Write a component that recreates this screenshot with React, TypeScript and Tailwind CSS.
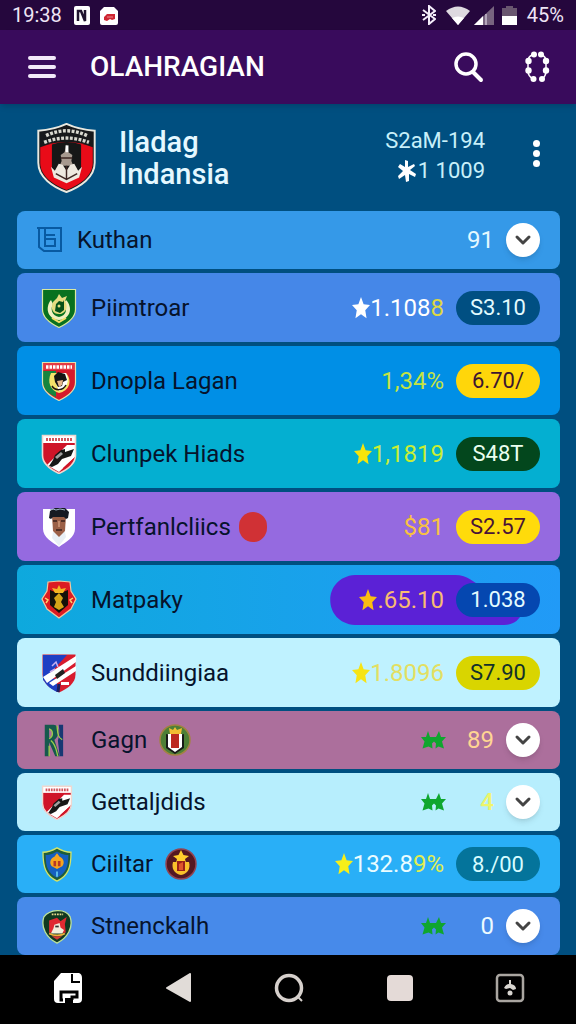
import React from 'react';
import { ChevronDown } from 'lucide-react';

const STAR = 'M12 1l3.2 7.2 7.8.8-5.8 5.3 1.6 7.9-6.8-4-6.8 4 1.6-7.9L1 9l7.8-.8z';

const Star: React.FC<{ className: string }> = ({ className }) => (
  <svg viewBox="1 1 22 22" className={`h-[22px] w-[18px] shrink-0 ${className}`} fill="currentColor" preserveAspectRatio="none">
    <path d={STAR} />
  </svg>
);

const DoubleStar: React.FC = () => (
  <svg viewBox="0 0 25 18" className="h-[18px] w-[25px] shrink-0 fill-[#0fa62e]">
    <path d="M7 0l2 6h5l1 0 3-6 2 6h5l-4 4.500 2 7-5.500-2-3 2 .5-5-2-2-2 2 .5 5-4-2L1.500 17.500l2-7L0 6h5z" />
  </svg>
);

const SHIELD = 'M1.500 1.500h33v20c0 9-8 14-16.500 18C9.500 35.500 1.500 30.500 1.500 21.500z';

const crests: Record<string, React.ReactNode> = {
  green: (
    <>
      <path d={SHIELD} fill="#08711f" stroke="#d9e9a0" strokeWidth="1.200" />
      <path d="M10 12c-6 7-4 19 8 20 12-1 14-13 7-20l-2 3c4 6 2 13-5 14-7-1-9-8-6-13z" fill="#f1f0c0" />
      <path d="M12 14l4-4 2-4 3 4 5-2-2 5c3 5 2 11-4 13-8 1-11-5-8-12z" fill="#e7dc80" />
      <path d="M15 16l3-3 4 1 1-2v10l-4 3-5-2z" fill="#075019" />
      <path d="M11 30l7 4 7-4" stroke="#f3df68" strokeWidth="2" fill="none" />
      <circle cx="18" cy="18" r="1.500" fill="#e8e080" />
    </>
  ),
  garuda: (
    <>
      <path d={SHIELD} fill="#d5192c" />
      <path d="M2 10h13v26C6 32 2 28 2 21z" fill="#16853e" />
      <path d="M2 2h32v7H2z" fill="#e43a43" />
      <path d="M5 6h26" stroke="#fff" strokeWidth="3.500" strokeDasharray="2.500 1" />
      <path d="M10 12h15c7 8 3 18-7 20-9-3-12-11-8-20z" fill="#f5e36a" />
      <path d="M16 12h9c4 8 1 15-7 18-3-6-4-12-2-18z" fill="#fff" />
      <path d="M13 15l4-4 7 2 2 6-4 2-1 4-4 1-3-5z" fill="#151515" />
      <path d="M16 20l6-1-1 5-3 2z" fill="#e7b98b" />
      <path d="M11 25c3 5 11 5 14-1" stroke="#201810" strokeWidth="1.500" fill="none" />
      <path d={SHIELD} fill="none" stroke="#dfe2b0" strokeWidth="1.200" />
    </>
  ),
  striped: (
    <>
      <path d={SHIELD} fill="#cf1428" />
      <path d="M2 2h32v7H2z" fill="#fff" />
      <path d="M5 5.500h26" stroke="#d2555c" strokeWidth="3" strokeDasharray="2 1" />
      <path d="M34 11v12L18 38 6 31 26 11z" fill="#fff" />
      <path d="M8 32l4-6 2-5 6-5 4-1v3l9-3-3 7-9 3-4 5-6 3z" fill="#171717" />
      <path d="M14 23l6-5 2 2-6 5z" fill="#a0a0a0" />
      <path d="M22 34l12-11v3c-3 5-7 8-12 10z" fill="#cf1428" />
      <path d={SHIELD} fill="none" stroke="#f1d7cf" strokeWidth="1.600" />
    </>
  ),
  portrait: (
    <>
      <path d="M2 2h32v20c0 8-9 13-16 18C11 35 2 30 2 22z" fill="#fff" />
      <path d="M12 25h12l1 5-7 9-7-8z" fill="#e8eff5" />
      <path d="M11 9h14l-1 15-6 6-6-6z" fill="#9b6047" />
      <path d="M8 11l1-7 5-3h10l4 4-1 6-2 1-2-2h-11l-2 2z" fill="#161a22" />
      <path d="M12 14h4M20 14h4M15 23h6" stroke="#3a201c" strokeWidth="1.500" />
      <path d="M18 14v6" stroke="#d09a7a" strokeWidth="1.500" />
      <path d="M9 3l3-1 3 1 4-1 5 1" stroke="#9eb5c8" strokeWidth="1" fill="none" />
    </>
  ),
  crimson: (
    <>
      <path d="M7 2l11-1 11 1 1 9 5 8-5 10-12 9L6 29 1 19l5-8z" fill="#dc1b22" stroke="#f0c8a0" strokeWidth="1.200" />
      <path d="M9 10l5 2 4-5 4 5 5-2v15l-9 8-9-8z" fill="#151109" />
      <path d="M18 5l2 4 5-1-3 5H14l-3-5 5 1z" fill="#f5b522" />
      <path d="M18 13l4 5-2 4 3 5-5 3-5-3 2-5-2-4z" fill="#d5a418" />
      <path d="M4 18l3 2-2 3M32 18l-3 2 2 3" fill="none" stroke="#ffd26a" strokeWidth="1.500" />
    </>
  ),
  duo: (
    <>
      <path d={SHIELD} fill="#d81c2e" />
      <path d="M2 2h24L2 28z" fill="#1e3fc4" />
      <path d="M16 26v13C8 35 4 31 2 25z" fill="#1e3fc4" />
      <path d="M35 3v6L6 30l-4-6zM35 13v5L12 33l-4-3z" fill="#fff" />
      <path d="M11 13l4-4 2 5M9 19l5-3" stroke="#c8b0f0" strokeWidth="1.500" fill="none" />
      <path d="M14 22l8-6 2 4-8 6z" fill="#222" />
      <path d="M20 29h8v3h-8z" fill="#fff" />
      <path d="M18 31l-1 8" stroke="#172060" strokeWidth="3" />
    </>
  ),
  monogram: (
    <>
      <path d="M4 2h5v36H4zM9 2h5c7 0 8 13 1 17l6 19h-5L9 22v-5c5-1 5-10 0-11z" fill="#15594d" />
      <path d="M20 2h5v36h-4l-2-18c2-5 2-11 1-18z" fill="#173873" />
      <path d="M9 7c5 1 5 9 0 11M11 20c6 5 6 11 8 18M9 26v12M18 3c1 7 0 13 6 16" stroke="#9ccf4a" strokeWidth="1.500" fill="none" />
    </>
  ),
  azure: (
    <>
      <path d="M2 6c6 0 11-2 16-5 5 3 10 5 16 5 0 17-3 27-16 33C5 33 2 23 2 6z" fill="#1e5c3c" stroke="#d4e465" strokeWidth="1.500" />
      <path d="M5 9c6 0 9-2 13-4 4 2 7 4 13 4 0 14-3 21-13 26C8 30 5 23 5 9z" fill="#155fc0" />
      <path d="M18 7l3 4c5 2 6 7 3 11l-6 3-6-3c-3-4-2-9 3-11z" fill="#f6a51f" />
      <path d="M14 16h3v6h-3zM19 16h3v6h-3z" fill="#b63725" />
      <path d="M18 28v6" stroke="#62c9ee" strokeWidth="2" />
    </>
  ),
  rounded: (
    <>
      <path d="M3 9c6-8 24-11 30 0 4 12-3 24-15 30C6 33-1 21 3 9z" fill="#103920" stroke="#bce39a" strokeWidth="1.500" />
      <path d="M9 13l9-3 4 4 7-5-2 8 1 10H9z" fill="#e02a31" />
      <path d="M12 6h13" stroke="#e6d98c" strokeWidth="2" strokeDasharray="2 1" />
      <path d="M15 18l6-2 1 5 4 3-2 4H11l3-6z" fill="#f4eedb" />
      <path d="M16 19h4v2h-4z" fill="#333" />
      <path d="M9 28c5 3 14 3 18 0" stroke="#f0b13c" strokeWidth="2" fill="none" />
      <path d="M12 31l6 4 6-4z" fill="#d43a34" />
    </>
  ),
};

const medals: Record<string, React.ReactNode> = {
  olive: (
    <svg viewBox="0 0 32 32" className="ml-3 size-8">
      <circle cx="16" cy="16" r="15" fill="#4d7f36" stroke="#a28340" strokeWidth="1.500" />
      <path d="M7 10l4 1v10l5 5 5-5V11l4-1v14l-9 6-9-6z" fill="#171a17" />
      <path d="M9 10h14v13l-7 5-7-5z" fill="#fff" />
      <path d="M12 10h8v14h-8z" fill="#bc2921" />
      <path d="M10 4l4 2 2-3 2 3 5-2-1 6H11z" fill="#f2bd32" />
    </svg>
  ),
  maroon: (
    <svg viewBox="0 0 32 32" className="ml-3 size-8">
      <circle cx="16" cy="16" r="15" fill="#541822" stroke="#934452" strokeWidth="1.500" />
      <path d="M16 2l2.500 5 5.500 1-4 3 1 4h-10l1-4-4-3 5.500-1z" fill="#ffce2d" />
      <path d="M8 14h16c2 7-2 12-8 13-6-1-10-6-8-13z" fill="#f9c12b" />
      <path d="M12 13h8v10h-8z" fill="#9b2119" />
      <path d="M14 16l4-2v8h-4z" fill="#df562c" />
    </svg>
  ),
};

const Crest: React.FC<{ id: string; tall: boolean }> = ({ id, tall }) => {
  if (id === 'box') {
    return (
      <svg viewBox="0 0 26 26" className="size-[26px] shrink-0" fill="none" stroke="#085aa2" strokeWidth="2">
        <path d="M0 1h24v23H7l-5-4V1M8 1v18h10v-7H8m0-4h10" />
      </svg>
    );
  }
  return (
    <svg viewBox="0 0 36 40" className={tall ? 'h-10 w-9 shrink-0' : 'h-[35px] w-8 shrink-0'}>
      {crests[id]}
    </svg>
  );
};

type Team = {
  name: string;
  crest: string;
  tall?: boolean;
  bg: string;
  value: React.ReactNode;
  valueColor: string;
  star?: string;
  pill?: string;
  pillStyle?: string;
  stars?: boolean;
  extra?: React.ReactNode;
  blob?: boolean;
};

const teams: Team[] = [
  { name: 'Kuthan', crest: 'box', bg: 'bg-[#3599e8]', value: '91', valueColor: 'text-[#e4f8ff]' },
  {
    name: 'Piimtroar', crest: 'green', tall: true, bg: 'bg-[#4587e8]',
    value: <>1.108<span className="text-[#ded743]">8</span></>, valueColor: 'text-white',
    star: 'text-white', pill: 'S3.10', pillStyle: 'bg-[#004f82] text-[#e2fbff]',
  },
  {
    name: 'Dnopla Lagan', crest: 'garuda', tall: true, bg: 'bg-[#008fe6]', value: '1,34%', valueColor: 'text-[#c5e342]',
    pill: '6.70/', pillStyle: 'bg-[#ffd60a] text-[#3c1531]',
  },
  {
    name: 'Clunpek Hiads', crest: 'striped', tall: true, bg: 'bg-[#04afd1]', value: '1,1819', valueColor: 'text-[#c9ee35]',
    star: 'text-[#f5e50b]', pill: 'S48T', pillStyle: 'bg-[#03471d] text-[#eafff0]',
  },
  {
    name: 'Pertfanlcliics', crest: 'portrait', tall: true, bg: 'bg-[#956ae0]', value: '$81', valueColor: 'text-[#f8c140]',
    pill: 'S2.57', pillStyle: 'bg-[#ffdb0b] text-[#481337]',
    extra: <span className="ml-2 h-[30px] w-7 rounded-full bg-[#d03135]" />,
  },
  {
    name: 'Matpaky', crest: 'crimson', tall: true, bg: 'bg-linear-to-r from-[#0ea9dd] to-[#219af7]', value: '.65.10', valueColor: 'text-[#f8bb72]',
    star: 'text-[#fbbd12]', pill: '1.038', pillStyle: 'bg-[#0547b0] text-[#e3fbff]', blob: true,
  },
  {
    name: 'Sunddiingiaa', crest: 'duo', tall: true, bg: 'bg-[#bff2ff]', value: '1.8096', valueColor: 'text-[#e3df61]',
    star: 'text-[#f7e414]', pill: 'S7.90', pillStyle: 'bg-[#d9d500] text-[#12302b]',
  },
  {
    name: 'Gagn', crest: 'monogram', bg: 'bg-[#ac6f9c]', value: '89', valueColor: 'text-[#ffd593]', stars: true,
    extra: medals.olive,
  },
  { name: 'Gettaljdids', crest: 'striped', bg: 'bg-[#b7eefd]', value: '4', valueColor: 'text-[#edf56b] font-medium', stars: true },
  {
    name: 'Ciiltar', crest: 'azure', bg: 'bg-[#29aff7]', value: <>132.8<span className="text-[#e2ee50]">9%</span></>, valueColor: 'text-[#eafcff]',
    star: 'text-[#f7ef18]', pill: '8./00', pillStyle: 'bg-[#04749b] text-[#d6fcff]', extra: medals.maroon,
  },
  { name: 'Stnenckalh', crest: 'rounded', bg: 'bg-[#478aea]', value: '0', valueColor: 'text-[#ecfaff]', stars: true },
];

const TeamRow: React.FC<{ team: Team }> = ({ team }) => (
  <li className={`relative flex items-center rounded-lg pr-5 ${team.crest === 'box' ? 'pl-5' : 'pl-6'} ${team.tall ? 'h-[69px]' : 'h-[58px]'} ${team.bg}`}>
    {team.blob && (
      <svg viewBox="0 0 194 50" className="absolute right-9 h-[50px] w-[194px]" fill="#5b21d6">
        <path d="M25 0H125C138 0 144 8 156 14L192 38C189 46 182 50 174 50H25C-8 48-8 2 25 0z" />
      </svg>
    )}
    <div className={`flex shrink-0 items-center ${team.crest === 'box' ? 'w-10' : 'w-[50px]'}`}>
      <Crest id={team.crest} tall={!!team.tall} />
    </div>
    <span className="text-[24px] leading-8 text-[#06132c]">{team.name}</span>
    {team.extra}
    <div className="relative ml-auto flex items-center">
      {team.star && <Star className={team.star} />}
      {team.stars && <DoubleStar />}
      <span className={`text-[24px] leading-8 ${team.pill ? '' : 'w-12 text-right'} ${team.valueColor}`}>{team.value}</span>
      {team.pill ? (
        <span className={`ml-3 flex h-[34px] w-[84px] items-center justify-center rounded-full text-[22px] ${team.pillStyle}`}>{team.pill}</span>
      ) : (
        <button type="button" aria-label={`Expand ${team.name}`} className="ml-3 flex size-[34px] items-center justify-center rounded-full bg-white text-[#444] shadow-md">
          <ChevronDown size={24} strokeWidth={3} />
        </button>
      )}
    </div>
  </li>
);

const StatusBar: React.FC = () => (
  <div className="flex h-[30px] items-center bg-[#25073d] px-3 text-[20px] leading-7 text-[#eee5f5]">
    <span>19:38</span>
    <svg viewBox="0 0 16 19" className="ml-3 h-[19px] w-4">
      <rect width="16" height="19" rx="2" fill="#fff" />
      <path d="M4 15V5h3l4 10V4" fill="none" stroke="#20142e" strokeWidth="2.500" />
    </svg>
    <svg viewBox="0 0 18 19" className="ml-2.5 h-[19px] w-[18px]">
      <path d="M4 1h10l4 4v12q0 2-2 2H2q-2 0-2-2V5z" fill="#fff" />
      <path d="M4 14V11l3-3h8v5l-3 1-2-1-3 2z" fill="#cf2633" />
      <path d="M7 11h6" stroke="#e98a8f" />
    </svg>
    <div className="ml-auto flex items-center">
      <svg viewBox="0 0 14 20" className="h-5 w-3.5" fill="none" stroke="#f5eefa" strokeWidth="2">
        <path d="M1 5l12 9-6 5V1l6 5-12 9M0 10h3M11 10h3" />
      </svg>
      <svg viewBox="0 0 24 19" className="ml-2.5 h-[19px] w-6">
        <path d="M0 5Q12-4 24 5L12 19z" fill="#ded9e0" />
        <path d="M6 12q6-3 12 0l-6 7z" fill="#fff" />
      </svg>
      <svg viewBox="0 0 20 19" className="ml-1 h-[19px] w-5">
        <path d="M20 0v19H0z" fill="#77647f" />
        <path d="M9 10v9H0z" fill="#fff" />
        <path d="M12 8v11" stroke="#b3a5ba" strokeWidth="2" />
      </svg>
      <svg viewBox="0 0 15 19" className="ml-2 h-[19px] w-[15px]">
        <path d="M4 0h7v2h4v17H0V2h4z" fill="#69566f" />
        <path d="M0 10h15v9H0z" fill="#fff" />
      </svg>
      <span className="ml-2.5">45%</span>
    </div>
  </div>
);

const AppBar: React.FC = () => (
  <header className="relative flex h-[74px] items-center bg-[#390b5c] pr-[26px] pl-7 shadow-md">
    <button type="button" aria-label="Menu" className="flex w-7 flex-col gap-[5px]">
      <span className="h-1 rounded-full bg-[#f3e9fa]" />
      <span className="h-1 rounded-full bg-[#f3e9fa]" />
      <span className="h-1 rounded-full bg-[#f3e9fa]" />
    </button>
    <h1 className="ml-[34px] text-[28px] font-medium text-white">OLAHRAGIAN</h1>
    <button type="button" aria-label="Search" className="ml-auto">
      <svg viewBox="0 0 30 31" className="h-[31px] w-[30px]" fill="none" stroke="#fff" strokeLinecap="round">
        <circle cx="12" cy="12" r="10" strokeWidth="3.500" />
        <path d="M19 20l8 8" strokeWidth="4" />
      </svg>
    </button>
    <button type="button" aria-label="Settings" className="ml-10">
      <svg viewBox="0 0 26 32" className="h-8 w-[26px]" fill="#fff">
        <path d="M8 4Q4 6 4 10v10q0 5 5 8M18 4q4 2 4 6v10q0 5-4 8" fill="none" stroke="#fff" strokeWidth="1.500" />
        <circle cx="10" cy="3.500" r="3" /><circle cx="17" cy="3.500" r="3" />
        <circle cx="4.500" cy="10" r="3.200" /><circle cx="22" cy="10" r="3.200" />
        <circle cx="4.500" cy="19.500" r="3.200" /><circle cx="22" cy="19.500" r="3.200" />
        <circle cx="9.500" cy="28" r="3" /><circle cx="18" cy="28" r="3" />
      </svg>
    </button>
  </header>
);

const Summary: React.FC = () => (
  <section className="flex h-[107px] items-center pr-9 pl-9">
    <svg viewBox="0 0 62 72" className="h-[70px] w-[61px] shrink-0">
      <path d="M2 8Q18 7 31 1q13 6 29 7v33c0 15-15 25-29 30C17 66 2 56 2 41z" fill="#17191b" stroke="#e9e9e0" strokeWidth="2" />
      <path d="M4 25q27-11 54 0v16c0 14-14 23-27 28C18 64 4 55 4 41z" fill="#e90b18" />
      <path d="M10 13q21-10 42 0M8 20q23-9 46 0" fill="none" stroke="#d8d8cf" strokeWidth="3.500" strokeDasharray="3 1.500" />
      <path d="M16 22q15-5 30 0v25q-3 8-15 13-12-5-15-13z" fill="#161717" />
      <path d="M31 22l2 8 4 3-1 6 2 5H24l2-5-1-6 4-3z" fill="#a79a8f" />
      <path d="M30 23h3v7h-3z" fill="#fff" />
      <path d="M15 45l4 4 4-7 4 1 4 6 4-6 4-1 4 7 4-4-3 11-13 6-13-6z" fill="#eee9df" />
      <path d="M20 52l11 6 11-6M31 44v14M25 36l12 0" fill="none" stroke="#3e2723" strokeWidth="1.500" />
    </svg>
    <h2 className="ml-[22px] text-[29px] leading-8 font-medium text-[#e5f8ff]">
      Iladag
      <br />
      Indansia
    </h2>
    <div className="ml-auto flex flex-col items-end pb-1 text-[22px] leading-[30px] text-[#c8f0fa]">
      <span>S2aM-194</span>
      <span className="flex items-center">
        <svg viewBox="0 0 18 22" className="h-[22px] w-[18px]">
          <path d="M7 0l3 1v6l6-3 1 2-5 4 6 4-1 3-6-3v7l-3 1-1-7-6 4-1-3 5-5-5-4 2-3 5 3z" fill="#fff" />
        </svg>
        <span className="ml-0.5">1 1009</span>
      </span>
    </div>
    <button type="button" aria-label="More" className="ml-12 flex flex-col gap-[3px] pb-2">
      <span className="size-[7px] rounded-full bg-white" />
      <span className="size-[7px] rounded-full bg-white" />
      <span className="size-[7px] rounded-full bg-white" />
    </button>
  </section>
);

const NavBar: React.FC = () => (
  <nav className="flex h-[69px] items-center justify-between bg-black pr-[51px] pb-1 pl-[53px]">
    <button type="button" aria-label="Home">
      <svg viewBox="0 0 30 32" className="h-8 w-[30px]">
        <path d="M8 1h18q3 1 3 5v21q0 4-4 4h-5v-5h-8v5H5q-4 0-4-4V9z" fill="#fff" />
        <path d="M19 2v8h8" fill="none" stroke="#000" strokeWidth="2" />
        <path d="M10 28h-2v-8h16v5h-5v3" fill="none" stroke="#000" strokeWidth="3" />
      </svg>
    </button>
    <button type="button" aria-label="Back">
      <svg viewBox="0 0 26 30" className="h-[30px] w-[26px]">
        <path d="M24 1v27L1 15z" fill="#e1dcd8" stroke="#e1dcd8" strokeWidth="2" strokeLinejoin="round" />
      </svg>
    </button>
    <button type="button" aria-label="Circle">
      <svg viewBox="0 0 30 30" className="size-[30px]" fill="none" stroke="#d6d0cc" strokeWidth="3.500">
        <circle cx="15" cy="15" r="12.500" />
        <path d="M24 24l4 4" strokeWidth="2" />
      </svg>
    </button>
    <button type="button" aria-label="Recent" className="size-[26px] rounded-sm bg-[#e4dad7]" />
    <button type="button" aria-label="Assistant">
      <svg viewBox="0 0 30 30" className="size-[30px]">
        <rect x="2" y="2" width="26" height="26" rx="3" fill="none" stroke="#aaa6a1" strokeWidth="2.500" />
        <path d="M9 15q2-4 5-4V7h2v4q5 1 5 5l-3 1-3-2-4 1z" fill="#d8d5d0" />
        <circle cx="15" cy="20" r="2.500" fill="#d8d5d0" />
      </svg>
    </button>
  </nav>
);

const App: React.FC = () => {
  return (
    <div className="min-h-screen bg-[#004f80] font-[Roboto,sans-serif]">
      <StatusBar />
      <AppBar />
      <main>
        <Summary />
        <ul className="flex flex-col gap-1 pr-4 pl-[17px]">
          {teams.map((team) => (
            <TeamRow key={team.name} team={team} />
          ))}
        </ul>
      </main>
      <NavBar />
    </div>
  );
};

export default App;
